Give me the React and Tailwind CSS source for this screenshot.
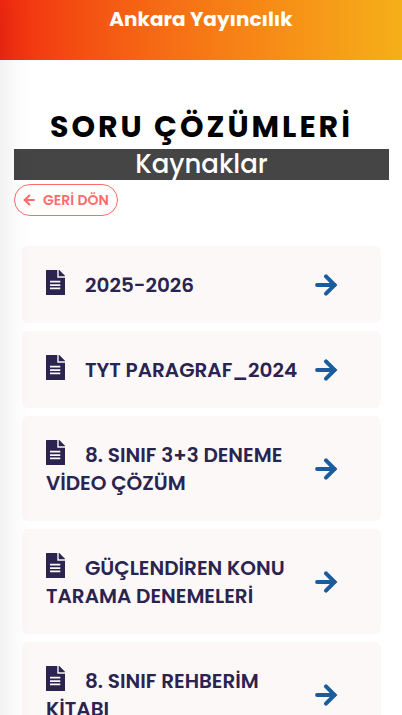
const resources = [
  { name: "2025-2026", path: "#2025-2026" },
  { name: "TYT PARAGRAF_2024", path: "#tyt-paragraf" },
  { name: "8. SINIF 3+3 DENEME VİDEO ÇÖZÜM", path: "#deneme-video" },
  { name: "GÜÇLENDİREN KONU TARAMA DENEMELERİ", path: "#konu-tarama" },
  { name: "8. SINIF REHBERİM KİTABI", path: "#rehberim" },
];

function FileIcon({ className }) {
  return (
    <svg viewBox="0 0 19 25" fill="currentColor" className={className} aria-hidden="true">
      <path
        fillRule="evenodd"
        d="M.6 0H11.3V7.8H19v16.6a.6.6 0 0 1-.6.6H.6a.6.6 0 0 1-.6-.6V.6A.6.6 0 0 1 .6 0ZM4 10.8v1.7h10.3v-1.7ZM4 14.2v1.7h10.3v-1.7ZM4 17.6v1.7h10.3v-1.7Z"
      />
      <path d="M12.7 0h.6L19 5.7v.6h-6.3Z" />
    </svg>
  );
}

function ArrowIcon({ className }) {
  return (
    <svg viewBox="0 0 23 22" fill="none" stroke="currentColor" className={className} aria-hidden="true">
      <path d="M2 11H19.5" strokeWidth="3.8" strokeLinecap="round" />
      <path d="M11 2.4L19.6 11L11 19.6" strokeWidth="4" strokeLinecap="round" />
    </svg>
  );
}

function ResourceCard({ name, path }) {
  return (
    <a href={path} className="flex items-center rounded-md bg-[#fcf8f7] px-6 py-6 text-[#2b2350]">
      <span className="min-w-0 flex-1 text-xl leading-7 font-semibold">
        <FileIcon className="mr-5 inline-block h-[25px] w-[19px] align-[-3px]" />
        {name}
      </span>
      <span className="flex w-[42px] shrink-0">
        <ArrowIcon className="h-[22px] w-[23px] text-[#1b5c9f]" />
      </span>
    </a>
  );
}

export default function App() {
  return (
    <div
      lang="tr"
      className="relative min-h-screen overflow-hidden bg-white font-['Poppins','Inter',sans-serif]"
    >
      <header className="h-[60px] bg-linear-to-r from-[#f12711] to-[#f5af19] pt-1 text-center">
        <span className="text-xl leading-[30px] font-bold text-white">Ankara Yayıncılık</span>
      </header>

      <main className="pt-11 pr-[13px] pb-10 pl-3.5">
        <h1 className="text-center text-3xl leading-[45px] font-bold tracking-[3px] text-black">
          SORU ÇÖZÜMLERİ
        </h1>
        <h2 className="bg-[#454545] text-center text-[26px] leading-[31px] font-medium text-white">
          Kaynaklar
        </h2>
        <button
          type="button"
          className="mt-1 flex h-8 items-center gap-2 rounded-full border border-[#ff6b6b] px-2 text-sm font-semibold text-[#ff6b6b]"
        >
          <ArrowIcon className="h-3 w-3 rotate-180" />
          GERİ DÖN
        </button>

        <nav className="mt-[30px] flex flex-col gap-2 px-2">
          {resources.map((item) => (
            <ResourceCard key={item.path} name={item.name} path={item.path} />
          ))}
        </nav>
      </main>

      {/* Closed side menu, only its shadow reaches the page */}
      <aside className="absolute inset-y-0 -left-60 w-60 shadow-[0_0_35px_rgba(0,0,0,0.1)]" />
    </div>
  );
}
